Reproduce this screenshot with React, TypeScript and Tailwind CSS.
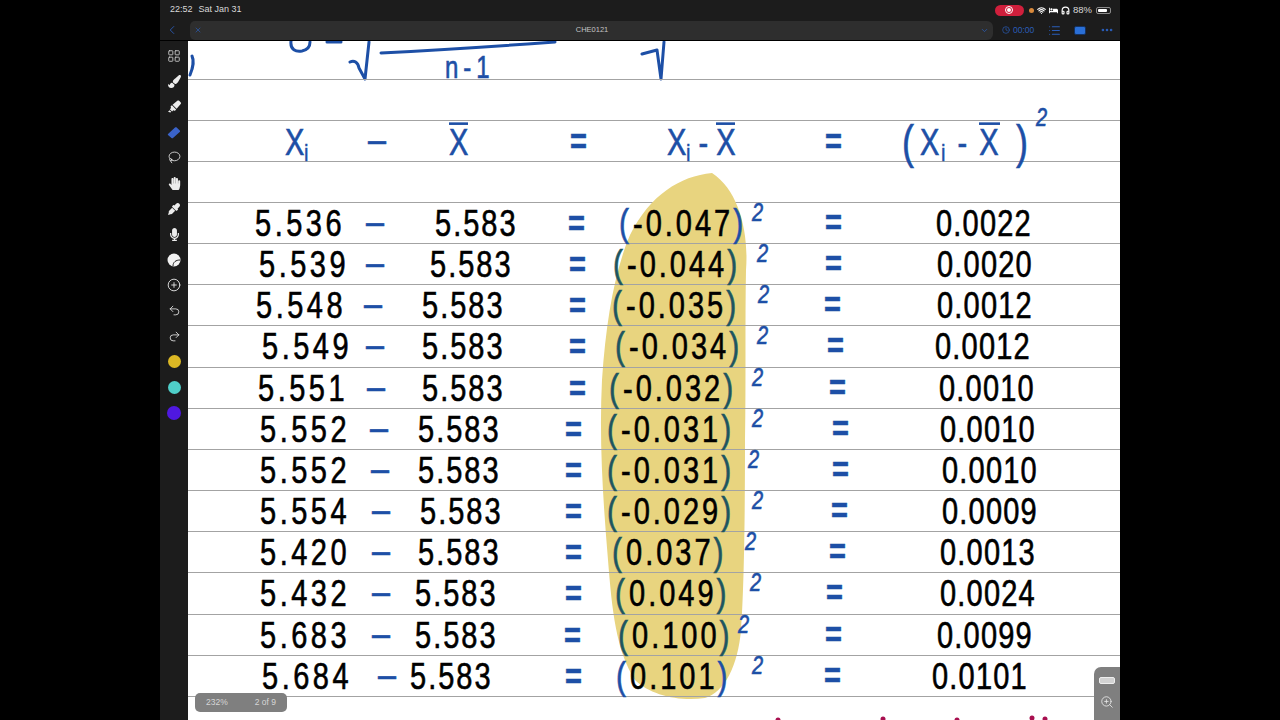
import React from 'react';
import { ChevronLeft, ChevronDown, X, LayoutGrid, Lasso, CirclePlus, Undo2, Redo2, Clock, List, Wifi, Headphones, ZoomIn, MoreHorizontal } from 'lucide-react';
import { FaPaintBrush, FaHighlighter, FaHandPaper, FaEyeDropper, FaMicrophone, FaBed } from 'react-icons/fa';

// no font size in here: each piece of ink names its own
const INK = "font-['Liberation_Sans',sans-serif] leading-none scale-y-[1.3] absolute whitespace-nowrap [-webkit-text-stroke:0.5px]";
const BLUE = 'text-[#1d4fa6]';
const TEAL = 'text-[#1d5560]';

type Row = {
  a: [string, number];
  minus: number;
  mean: [string, number];
  eq: number;
  paren: [string, number];
  sup: number;
  eq2: number;
  res: [string, number];
  blue?: boolean;
};

const rows: Row[] = [
  { a: ['5.536', 255], minus: 366, mean: ['5.583', 435], eq: 568, paren: ['-0.047', 619], sup: 752, eq2: 825, res: ['0.0022', 936], blue: true },
  { a: ['5.539', 259], minus: 366, mean: ['5.583', 430], eq: 569, paren: ['-0.044', 613], sup: 757, eq2: 825, res: ['0.0020', 937] },
  { a: ['5.548', 256], minus: 364, mean: ['5.583', 422], eq: 569, paren: ['-0.035', 612], sup: 758, eq2: 824, res: ['0.0012', 937] },
  { a: ['5.549', 262], minus: 366, mean: ['5.583', 422], eq: 569, paren: ['-0.034', 615], sup: 757, eq2: 827, res: ['0.0012', 935] },
  { a: ['5.551', 258], minus: 367, mean: ['5.583', 422], eq: 569, paren: ['-0.032', 609], sup: 752, eq2: 829, res: ['0.0010', 939] },
  { a: ['5.552', 260], minus: 370, mean: ['5.583', 418], eq: 565, paren: ['-0.031', 607], sup: 752, eq2: 832, res: ['0.0010', 940] },
  { a: ['5.552', 260], minus: 371, mean: ['5.583', 418], eq: 565, paren: ['-0.031', 607], sup: 748, eq2: 832, res: ['0.0010', 942] },
  { a: ['5.554', 260], minus: 372, mean: ['5.583', 420], eq: 565, paren: ['-0.029', 607], sup: 752, eq2: 831, res: ['0.0009', 942] },
  { a: ['5.420', 260], minus: 372, mean: ['5.583', 418], eq: 565, paren: ['0.037', 612], sup: 745, eq2: 829, res: ['0.0013', 940] },
  { a: ['5.432', 260], minus: 372, mean: ['5.583', 415], eq: 565, paren: ['0.049', 615], sup: 750, eq2: 826, res: ['0.0024', 940] },
  { a: ['5.683', 260], minus: 372, mean: ['5.583', 415], eq: 564, paren: ['0.100', 618], sup: 738, eq2: 825, res: ['0.0099', 937] },
  { a: ['5.684', 262], minus: 378, mean: ['5.583', 410], eq: 565, paren: ['0.101', 616], sup: 752, eq2: 824, res: ['0.0101', 932], blue: true },
];

// page starts at x=188
const at = (x: number) => ({ left: x - 188 });

const InkRow = ({ r }: { r: Row }) => (
  <div className="relative h-[41.17px] border-b-[1.5px] border-[#a3a3a3] text-black">
    <span className={`${INK} text-[29px] top-[6px] tracking-[3.5px]`} style={at(r.a[1])}>{r.a[0]}</span>
    <span className={`${INK} ${BLUE} top-[11px] font-bold text-[18px]`} style={at(r.minus)}>—</span>
    <span className={`${INK} text-[29px] top-[6px] tracking-[2px]`} style={at(r.mean[1])}>{r.mean[0]}</span>
    <span className={`${INK} ${BLUE} top-[6px] font-bold text-[29px]`} style={at(r.eq)}>=</span>
    <span className={`${INK} text-[29px] flex items-center top-[5px] tracking-[3px]`} style={at(r.paren[1])}>
      <span className={`text-[30px] mr-[1px] ${r.blue ? BLUE : TEAL}`}>(</span>
      <span>{r.paren[0]}</span>
      <span className={`text-[30px] ${r.blue ? BLUE : TEAL}`}>)</span>
    </span>
    <span className={`${INK} ${BLUE} top-[-1px] text-[20px] italic`} style={at(r.sup)}>2</span>
    <span className={`${INK} ${BLUE} top-[5px] font-bold text-[29px]`} style={at(r.eq2)}>=</span>
    <span className={`${INK} text-[29px] top-[6px] tracking-[1.2px]`} style={at(r.res[1])}>{r.res[0]}</span>
  </div>
);

const XBar = () => (
  <span className="relative inline-block">
    X
    <span className="absolute left-0 right-0 top-[-1px] h-[2px] bg-current" />
  </span>
);

const Sticker = () => (
  <svg width="14" height="14" viewBox="0 0 14 14">
    <circle cx="7" cy="7" r="6.5" fill="#f2f2f2" />
    <path d="M6 13c0-4 3-6 7-6" fill="none" stroke="#1c1c1c" strokeWidth="1" />
  </svg>
);

const Eraser = () => (
  <svg width="14" height="14" viewBox="0 0 14 14">
    <path d="M1 9L8 2.5C8.6 2 9.2 2 9.7 2.5L12.8 5.5C13.2 6 13.2 6.6 12.7 7L6 13C5.5 13.4 5 13.4 4.5 13L1 10C.7 9.7.7 9.3 1 9Z" fill="#3a63c9" />
  </svg>
);

const Sidebar = () => (
  <aside className="w-[28px] flex flex-col items-center pt-[2px] text-[#ececec]">
    {[
      <LayoutGrid size={14} strokeWidth={1.5} className="text-[#cfcfcf]" />,
      <FaPaintBrush size={13} />,
      <FaHighlighter size={13} />,
      <Eraser />,
      <Lasso size={13} strokeWidth={1.5} />,
      <FaHandPaper size={13} />,
      <FaEyeDropper size={12} />,
      <FaMicrophone size={13} />,
      <Sticker />,
      <CirclePlus size={14} strokeWidth={1.5} />,
      <Undo2 size={13} strokeWidth={1.5} />,
      <Redo2 size={13} strokeWidth={1.5} />,
      <span className="block size-[13px] rounded-full bg-[#dcb824]" />,
      <span className="block size-[13px] rounded-full bg-[#4fcfc9]" />,
      <span className="block size-[14px] rounded-full bg-[#4f18e0]" />,
    ].map((icon, i) => (
      <div key={i} className="h-[25.5px] flex items-center justify-center shrink-0">{icon}</div>
    ))}
  </aside>
);

export default function App() {
  return (
    <div className="h-[720px] w-[1280px] bg-black flex justify-center overflow-hidden font-['Liberation_Sans',sans-serif]">
      <div className="w-[960px] h-full bg-[#1c1c1c] flex flex-col">
        {/* status bar */}
        <div className="h-[20px] shrink-0 flex items-center justify-between pl-[10px] pr-[9px] text-[9px] text-[#d8d8d8]">
          <div className="flex gap-[6px]">
            <span>22:52</span>
            <span>Sat Jan 31</span>
          </div>
          <div className="flex items-center gap-[3px]">
            <div className="w-[29px] h-[11px] rounded-full bg-[#d01f3c] flex items-center justify-center mr-[2px]">
              <span className="size-[8px] rounded-full border border-white flex items-center justify-center">
                <span className="size-[4px] rounded-full bg-white" />
              </span>
            </div>
            <span className="size-[5px] rounded-full bg-[#d98a3c]" />
            <Wifi size={9} strokeWidth={3} className="text-white" />
            <FaBed size={9} className="text-white" />
            <Headphones size={9} strokeWidth={3} className="text-white" />
            <span className="text-[9.5px]">88%</span>
            <div className="w-[15px] h-[7px] rounded-[2px] border border-[#8a8a8a] p-[1px] ml-[1px]">
              <div className="h-full w-[85%] rounded-[1px] bg-white" />
            </div>
          </div>
        </div>

        {/* toolbar */}
        <div className="h-[21px] shrink-0 flex items-center border-b border-black text-[#2a5db8]">
          <div className="w-[30px] flex justify-center shrink-0">
            <ChevronLeft size={14} strokeWidth={1.5} className="mr-[6px]" />
          </div>
          <div className="w-[803px] h-[19px] rounded-l-[5px] rounded-r-[6px] bg-[#2e2e2e] flex items-center justify-between px-[4px] shrink-0">
            <X size={8} />
            <span className="text-[7.5px] text-[#c4c4c4] ml-[2px]">CHE0121</span>
            <ChevronDown size={9} />
          </div>
          <div className="flex-1 flex items-center justify-between pl-[9px] pr-[6px]">
            <div className="flex items-center gap-[3px] text-[8.5px]">
              <Clock size={8} strokeWidth={2} />
              <span>00:00</span>
            </div>
            <List size={13} strokeWidth={2} />
            <span className="w-[12px] h-[9px] rounded-[2px] bg-[#2a6fd6] border border-[#14315f]" />
            <MoreHorizontal size={14} strokeWidth={2.5} />
          </div>
        </div>

        <div className="flex-1 flex min-h-0">
          <Sidebar />

          {/* note page */}
          <main className="relative flex-1 bg-white overflow-hidden">
            {/* highlighter stroke and the cut off formula */}
            <svg className="absolute inset-0 w-[932px] h-[679px]" viewBox="188 41 932 679">
              <path
                d="M712 173C680 176 650 195 630 235C615 270 606 320 602 380C599 440 603 500 608 560C612 610 616 650 635 680C650 695 680 702 705 698C725 692 738 665 741 630C744 590 745 520 745 440C746 380 745 320 746 270C749 230 738 190 712 173Z"
                fill="#e8d47f"
              />
              <g fill="none" stroke="#1d4fa6" strokeWidth="3" strokeLinecap="round" strokeLinejoin="round">
                <path d="M190 75C193 68 194 60 192 56" />
                <path d="M291 41C290 50 296 52 302 51C307 50 310 47 310 42" />
                <path d="M327 42H341" />
                <path d="M350 62C354 60 358 62 359 68L365 79L369 42" />
                <path d="M381 53C440 50 500 46 555 42" />
                <path d="M642 54L657 50L661 79L664 42" />
              </g>
              <g fill="#a80f4f">
                <circle cx="778" cy="720" r="2.5" />
                <circle cx="883" cy="719" r="2.5" />
                <circle cx="957" cy="720" r="2.5" />
                <circle cx="1032" cy="718" r="2.5" />
                <circle cx="1045" cy="719" r="2.5" />
              </g>
            </svg>

            {/* ruled lines: first one sits at y=79 */}
            <div className="relative h-[38.5px] border-b-[1.5px] border-[#a3a3a3]">
              <span className={`${INK} ${BLUE} top-[15px] text-[24px] tracking-[5px]`} style={at(445)}>n-1</span>
            </div>
            <div className="h-[41.17px] border-b-[1.5px] border-[#a3a3a3]" />
            <div className={`relative h-[41.17px] border-b-[1.5px] border-[#a3a3a3] ${BLUE}`}>
              <span className={`${INK} text-[29px] top-[7px]`} style={at(285)}>X<sub className="text-[18px]">i</sub></span>
              <span className={`${INK} top-[11px] font-bold text-[18px]`} style={at(368)}>—</span>
              <span className={`${INK} text-[29px] top-[7px]`} style={at(449)}><XBar /></span>
              <span className={`${INK} top-[6px] font-bold text-[29px]`} style={at(570)}>=</span>
              <span className={`${INK} text-[29px] top-[7px]`} style={at(667)}>X<sub className="text-[18px]">i</sub> - <XBar /></span>
              <span className={`${INK} top-[6px] font-bold text-[29px]`} style={at(825)}>=</span>
              <span className={`${INK} top-[3px] text-[36px]`} style={at(902)}>(</span>
              <span className={`${INK} text-[29px] top-[7px] tracking-[2px]`} style={at(920)}>X<sub className="text-[18px]">i</sub> - <XBar /></span>
              <span className={`${INK} top-[3px] text-[36px]`} style={at(1016)}>)</span>
              <span className={`${INK} top-[-14px] text-[20px] italic`} style={at(1036)}>2</span>
            </div>
            <div className="h-[41.17px] border-b-[1.5px] border-[#a3a3a3]" />
            {rows.map((r, i) => (
              <InkRow key={i} r={r} />
            ))}

            {/* page indicator */}
            <div className="absolute left-[7px] bottom-[8px] w-[92px] h-[19px] rounded-[5px] bg-[#7f7f7f] flex items-center justify-between px-[11px] text-[8.5px] text-[#d6d6d6]">
              <span>232%</span>
              <span>2 of 9</span>
            </div>

            {/* zoom panel */}
            <div className="absolute right-0 bottom-0 w-[26px] h-[53px] rounded-tl-[7px] bg-[#7f7f7f] flex flex-col items-center pt-[10px] gap-[11px] text-[#e6e6e6]">
              <span className="w-[16px] h-[7px] rounded-[2px] bg-[#d2d2d2] border border-[#eeeeee]" />
              <ZoomIn size={14} strokeWidth={1.5} />
            </div>
          </main>
        </div>
      </div>
    </div>
  );
}
